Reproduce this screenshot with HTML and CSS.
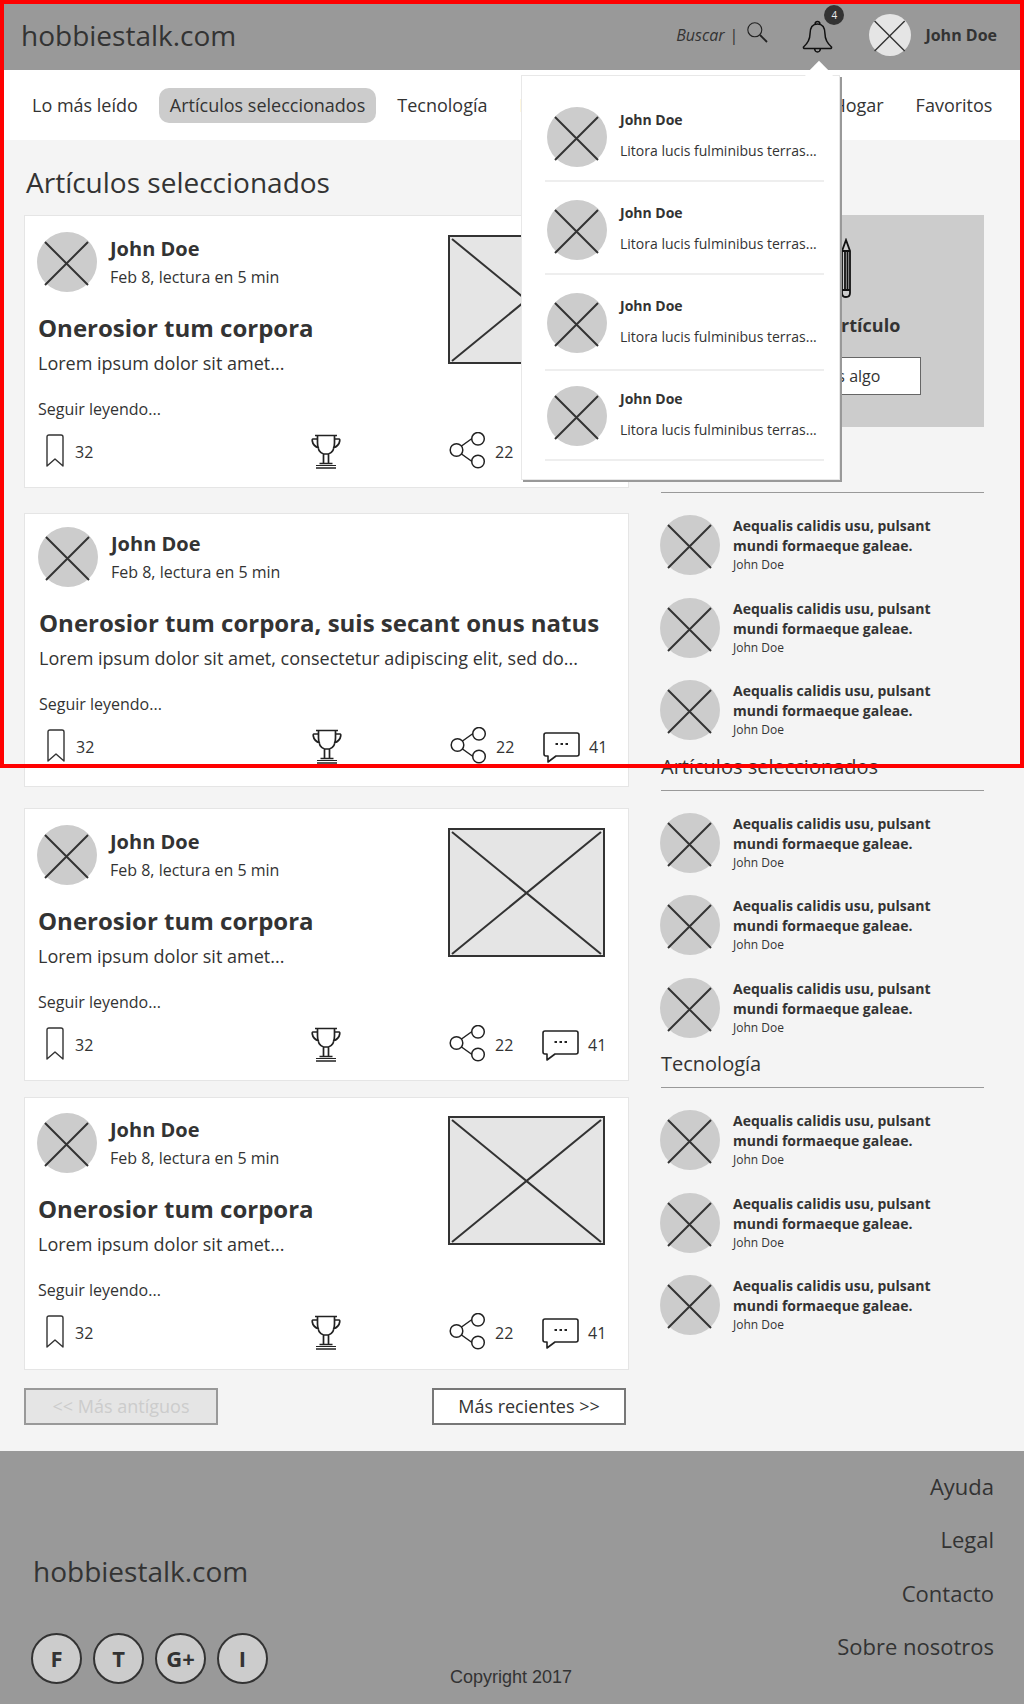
FILE: index.html
```html
<!DOCTYPE html>
<html lang="es">
<head>
<meta charset="utf-8">
<title>hobbiestalk.com</title>
<link rel="stylesheet" href="styles.css">
</head>
<body>
<svg class="defs" aria-hidden="true">
  <symbol id="i-avatar" viewBox="0 0 60 60">
    <circle cx="30" cy="30" r="30"/>
    <path d="M8 10 L51 53 M51 10 L8 53" fill="none" stroke="#333" stroke-width="2"/>
  </symbol>
  <symbol id="i-bookmark" viewBox="0 0 18 33">
    <path d="M1 32 V3 Q1 1 3 1 H15 Q17 1 17 3 V32 L9 25 Z" fill="none" stroke="#333" stroke-width="1.4" stroke-linejoin="round"/>
  </symbol>
  <symbol id="i-trophy" viewBox="0 0 30 36">
    <path d="M4 1.500 H26 M6.500 1.500 V9 Q6.500 18 12.500 20 V29 M23.500 1.500 V9 Q23.500 18 17.500 20 V29 M12.500 20 H17.500 M6 5 H2 Q1 5 1.300 7 Q2 12 8 14 M24 5 H28 Q29 5 28.700 7 Q28 12 22 14 M8.500 29.500 H21.500 M5 34 H25" fill="none" stroke="#222" stroke-width="1.700"/>
    <path d="M5 31.500 H25" stroke="#222" stroke-width="1"/>
  </symbol>
  <symbol id="i-share" viewBox="0 0 37 37">
    <path d="M12.500 14 L23 6.500 M12.500 22 L23 29.500" fill="none" stroke="#222" stroke-width="1.500"/>
    <circle cx="7.500" cy="18" r="6.300" fill="none" stroke="#222" stroke-width="1.500"/>
    <circle cx="29" cy="6.800" r="6.300" fill="none" stroke="#222" stroke-width="1.500"/>
    <circle cx="29" cy="29.500" r="6.300" fill="none" stroke="#222" stroke-width="1.500"/>
  </symbol>
  <symbol id="i-comment" viewBox="0 0 37 31">
    <path d="M3 1 H34 Q36 1 36 3 V22 Q36 24 34 24 H13 L5 30 V24 H3 Q1 24 1 22 V3 Q1 1 3 1 Z" fill="none" stroke="#222" stroke-width="1.600" stroke-linejoin="round"/>
    <path d="M12.500 12 H15 M17.500 12 H20 M22.500 12 H25" fill="none" stroke="#222" stroke-width="2"/>
  </symbol>
</svg>

<div class="page">
  <header class="topbar">
    <a class="logo">hobbiestalk.com</a>
    <div class="search"><span class="search-label">Buscar</span><span class="search-sep">|</span>
      <svg class="search-icon" viewBox="0 0 21 21"><circle cx="7.800" cy="7.800" r="7" fill="none" stroke="#222" stroke-width="1.100"/><path d="M13 13 L20 20" fill="none" stroke="#222" stroke-width="1.800"/></svg>
    </div>
    <div class="bell">
      <svg class="bell-icon" viewBox="0 0 31 33"><path d="M15.500 4 C9 4 8 9 8 14 C8 20 6 23 1.500 27 Q1 28.500 3 28.500 H28 Q30 28.500 29.500 27 C25 23 23 20 23 14 C23 9 22 4 15.500 4 Z M13 4.500 C13 .5 18 .5 18 4.500 M12.500 28.500 C13 33 18 33 18.500 28.500" fill="none" stroke="#111" stroke-width="1.500"/></svg>
      <span class="badge">4</span>
    </div>
    <svg class="avatar avatar-small avatar-light"><use href="#i-avatar"/></svg>
    <span class="user-name">John Doe</span>
  </header>

  <nav class="tabs">
    <a class="tab">Lo más leído</a>
    <a class="tab tab-active">Artículos seleccionados</a>
    <a class="tab">Tecnología</a>
    <a class="tab">Fotografía</a>
    <a class="tab">Música</a>
    <a class="tab">Películas</a>
    <a class="tab">Hogar</a>
    <a class="tab">Favoritos</a>
  </nav>

  <main class="content">
    <section class="articles">
      <h1 class="page-title">Artículos seleccionados</h1>

      <article class="card">
        <div class="card-top">
          <div class="card-main">
            <div class="author">
              <svg class="avatar"><use href="#i-avatar"/></svg>
              <div class="author-text"><div class="author-name">John Doe</div><div class="author-meta">Feb 8, lectura en 5 min</div></div>
            </div>
            <h2 class="card-title">Onerosior tum corpora</h2>
            <p class="card-lead">Lorem ipsum dolor sit amet...</p>
            <p class="card-more">Seguir leyendo...</p>
          </div>
          <svg class="thumb" viewBox="0 0 157 129"><rect x="1" y="1" width="155" height="127" fill="#e5e5e5" stroke="#333" stroke-width="2"/><path d="M4 4 L153 126 M153 4 L4 126" fill="none" stroke="#333" stroke-width="2"/></svg>
        </div>
        <div class="actions">
          <div class="action action-save"><svg class="ic-bookmark"><use href="#i-bookmark"/></svg><span>32</span></div>
          <div class="action"><svg class="ic-trophy"><use href="#i-trophy"/></svg></div>
          <div class="action"><svg class="ic-share"><use href="#i-share"/></svg><span>22</span></div>
          <div class="action"><svg class="ic-comment"><use href="#i-comment"/></svg><span>41</span></div>
        </div>
      </article>

      <article class="card card-wide">
        <div class="card-top">
          <div class="card-main">
            <div class="author">
              <svg class="avatar"><use href="#i-avatar"/></svg>
              <div class="author-text"><div class="author-name">John Doe</div><div class="author-meta">Feb 8, lectura en 5 min</div></div>
            </div>
            <h2 class="card-title">Onerosior tum corpora, suis secant onus natus</h2>
            <p class="card-lead">Lorem ipsum dolor sit amet, consectetur adipiscing elit, sed do...</p>
            <p class="card-more">Seguir leyendo...</p>
          </div>
        </div>
        <div class="actions">
          <div class="action action-save"><svg class="ic-bookmark"><use href="#i-bookmark"/></svg><span>32</span></div>
          <div class="action"><svg class="ic-trophy"><use href="#i-trophy"/></svg></div>
          <div class="action"><svg class="ic-share"><use href="#i-share"/></svg><span>22</span></div>
          <div class="action"><svg class="ic-comment"><use href="#i-comment"/></svg><span>41</span></div>
        </div>
      </article>

      <article class="card card-third">
        <div class="card-top">
          <div class="card-main">
            <div class="author">
              <svg class="avatar"><use href="#i-avatar"/></svg>
              <div class="author-text"><div class="author-name">John Doe</div><div class="author-meta">Feb 8, lectura en 5 min</div></div>
            </div>
            <h2 class="card-title">Onerosior tum corpora</h2>
            <p class="card-lead">Lorem ipsum dolor sit amet...</p>
            <p class="card-more">Seguir leyendo...</p>
          </div>
          <svg class="thumb" viewBox="0 0 157 129"><rect x="1" y="1" width="155" height="127" fill="#e5e5e5" stroke="#333" stroke-width="2"/><path d="M4 4 L153 126 M153 4 L4 126" fill="none" stroke="#333" stroke-width="2"/></svg>
        </div>
        <div class="actions">
          <div class="action action-save"><svg class="ic-bookmark"><use href="#i-bookmark"/></svg><span>32</span></div>
          <div class="action"><svg class="ic-trophy"><use href="#i-trophy"/></svg></div>
          <div class="action"><svg class="ic-share"><use href="#i-share"/></svg><span>22</span></div>
          <div class="action"><svg class="ic-comment"><use href="#i-comment"/></svg><span>41</span></div>
        </div>
      </article>

      <article class="card card-fourth">
        <div class="card-top">
          <div class="card-main">
            <div class="author">
              <svg class="avatar"><use href="#i-avatar"/></svg>
              <div class="author-text"><div class="author-name">John Doe</div><div class="author-meta">Feb 8, lectura en 5 min</div></div>
            </div>
            <h2 class="card-title">Onerosior tum corpora</h2>
            <p class="card-lead">Lorem ipsum dolor sit amet...</p>
            <p class="card-more">Seguir leyendo...</p>
          </div>
          <svg class="thumb" viewBox="0 0 157 129"><rect x="1" y="1" width="155" height="127" fill="#e5e5e5" stroke="#333" stroke-width="2"/><path d="M4 4 L153 126 M153 4 L4 126" fill="none" stroke="#333" stroke-width="2"/></svg>
        </div>
        <div class="actions">
          <div class="action action-save"><svg class="ic-bookmark"><use href="#i-bookmark"/></svg><span>32</span></div>
          <div class="action"><svg class="ic-trophy"><use href="#i-trophy"/></svg></div>
          <div class="action"><svg class="ic-share"><use href="#i-share"/></svg><span>22</span></div>
          <div class="action"><svg class="ic-comment"><use href="#i-comment"/></svg><span>41</span></div>
        </div>
      </article>

      <div class="pager">
        <a class="pager-btn pager-off">&lt;&lt; Más antíguos</a>
        <a class="pager-btn">Más recientes &gt;&gt;</a>
      </div>
    </section>

    <aside class="sidebar">
      <div class="cta">
        <svg class="pencil" viewBox="0 0 10 60"><path d="M1 13 L5 2 L9 13 V55 Q9 59 5 59 Q1 59 1 55 Z M1 13 H9 M4 14 V52 M6.500 14 V52 M1 52 H9" fill="none" stroke="#111" stroke-width="1.800"/></svg>
        <div class="cta-title">Redactar artículo</div>
        <a class="cta-btn">Cuéntanos algo</a>
      </div>

      <section class="side-section">
        <h3 class="side-title">Lo más leído</h3>
        <div class="side-item"><svg class="avatar"><use href="#i-avatar"/></svg><div><div class="side-text">Aequalis calidis usu, pulsant mundi formaeque galeae.</div><div class="side-author">John Doe</div></div></div>
        <div class="side-item"><svg class="avatar"><use href="#i-avatar"/></svg><div><div class="side-text">Aequalis calidis usu, pulsant mundi formaeque galeae.</div><div class="side-author">John Doe</div></div></div>
        <div class="side-item"><svg class="avatar"><use href="#i-avatar"/></svg><div><div class="side-text">Aequalis calidis usu, pulsant mundi formaeque galeae.</div><div class="side-author">John Doe</div></div></div>
      </section>

      <section class="side-section">
        <h3 class="side-title">Artículos seleccionados</h3>
        <div class="side-item"><svg class="avatar"><use href="#i-avatar"/></svg><div><div class="side-text">Aequalis calidis usu, pulsant mundi formaeque galeae.</div><div class="side-author">John Doe</div></div></div>
        <div class="side-item"><svg class="avatar"><use href="#i-avatar"/></svg><div><div class="side-text">Aequalis calidis usu, pulsant mundi formaeque galeae.</div><div class="side-author">John Doe</div></div></div>
        <div class="side-item"><svg class="avatar"><use href="#i-avatar"/></svg><div><div class="side-text">Aequalis calidis usu, pulsant mundi formaeque galeae.</div><div class="side-author">John Doe</div></div></div>
      </section>

      <section class="side-section">
        <h3 class="side-title">Tecnología</h3>
        <div class="side-item"><svg class="avatar"><use href="#i-avatar"/></svg><div><div class="side-text">Aequalis calidis usu, pulsant mundi formaeque galeae.</div><div class="side-author">John Doe</div></div></div>
        <div class="side-item"><svg class="avatar"><use href="#i-avatar"/></svg><div><div class="side-text">Aequalis calidis usu, pulsant mundi formaeque galeae.</div><div class="side-author">John Doe</div></div></div>
        <div class="side-item"><svg class="avatar"><use href="#i-avatar"/></svg><div><div class="side-text">Aequalis calidis usu, pulsant mundi formaeque galeae.</div><div class="side-author">John Doe</div></div></div>
      </section>
    </aside>
  </main>

  <footer class="footer">
    <div class="footer-brand">
      <div class="footer-logo">hobbiestalk.com</div>
      <div class="social">
        <a class="social-btn">F</a>
        <a class="social-btn">T</a>
        <a class="social-btn">G+</a>
        <a class="social-btn">I</a>
      </div>
    </div>
    <div class="copyright">Copyright 2017</div>
    <div class="footer-links">
      <a>Ayuda</a>
      <a>Legal</a>
      <a>Contacto</a>
      <a>Sobre nosotros</a>
    </div>
  </footer>

  <div class="popover">
    <span class="popover-arrow"></span>
    <div class="note"><svg class="avatar"><use href="#i-avatar"/></svg><div><div class="note-name">John Doe</div><div class="note-text">Litora lucis fulminibus terras...</div></div></div>
    <div class="note"><svg class="avatar"><use href="#i-avatar"/></svg><div><div class="note-name">John Doe</div><div class="note-text">Litora lucis fulminibus terras...</div></div></div>
    <div class="note note-tall"><svg class="avatar"><use href="#i-avatar"/></svg><div><div class="note-name">John Doe</div><div class="note-text">Litora lucis fulminibus terras...</div></div></div>
    <div class="note"><svg class="avatar"><use href="#i-avatar"/></svg><div><div class="note-name">John Doe</div><div class="note-text">Litora lucis fulminibus terras...</div></div></div>
  </div>

  <div class="fold-frame"></div>
</div>
</body>
</html>
```
FILE: styles.css
```css
* { box-sizing: border-box; }
html, body { margin: 0; padding: 0; }
body { font-family: "Open Sans", sans-serif; color: #333; background: #f4f4f4; }
h1, h2, h3, p { margin: 0; font-weight: normal; }
.defs { display: none; }

.page { position: relative; width: 1024px; height: 1704px; overflow: hidden; }

.avatar { display: block; flex: none; width: 60px; height: 60px; fill: #ccc; }
.avatar-small { width: 42px; height: 42px; margin-left: 36px; }
.avatar-light { fill: #e5e5e5; }

/* top bar */
.topbar { display: flex; align-items: center; height: 70px; padding: 0 27px 0 21px; background: #999; }
.logo { font-size: 28px; line-height: 38px; }
.search { display: flex; align-items: center; margin-left: auto; }
.search-label { font-size: 16px; font-style: italic; }
.search-sep { margin-left: 5px; font-size: 16px; }
.search-icon { width: 21px; height: 21px; margin: -5px 0 0 9px; }
.bell { position: relative; width: 31px; height: 33px; margin: 3px 0 0 34px; }
.bell-icon { display: block; width: 31px; height: 33px; }
.badge { position: absolute; left: 22px; top: -15px; width: 20px; height: 20px; border-radius: 50%; background: #333; color: #eee; font-size: 10px; line-height: 20px; text-align: center; }
.user-name { margin-left: 14px; font-size: 16px; font-weight: 700; }

/* tabs */
.tabs { display: flex; align-items: center; gap: 10px; height: 70px; padding: 0 0 0 21px; background: #fff; }
.tab { padding: 0 11px; height: 35px; font-size: 18px; line-height: 35px; border-radius: 10px; white-space: nowrap; }
.tab-active { background: #ccc; }

/* layout */
.content { display: flex; height: 1311px; padding: 23px 0 0 24px; background: #f4f4f4; }
.articles { width: 605px; flex: none; }
.page-title { margin: 0 0 14px 2px; font-size: 28px; line-height: 38px; }

/* cards */
.card { height: 273px; padding: 16px 23px 0 13px; background: #fff; border: 1px solid #e5e5e5; }
.card-wide { margin-top: 25px; height: 274px; padding-top: 13px; padding-left: 14px; }
.card-third { margin-top: 21px; padding-top: 16px; }
.card-fourth { margin-top: 16px; padding-top: 15px; }
.card-top { display: flex; justify-content: space-between; }
.author { display: flex; gap: 13px; margin-left: -1px; }
.author-text { padding-top: 3px; }
.author-name { font-size: 20px; line-height: 28px; font-weight: 700; }
.author-meta { margin-top: 2px; font-size: 16px; line-height: 24px; }
.card-title { margin-top: 20px; font-size: 24px; line-height: 32px; font-weight: 700; white-space: nowrap; }
.card-lead { margin-top: 5px; font-size: 18px; line-height: 28px; white-space: nowrap; }
.card-more { margin-top: 20px; font-size: 16px; line-height: 24px; }
.thumb { display: block; flex: none; width: 157px; height: 129px; margin-top: 3px; }

.actions { display: grid; grid-template-columns: 265px 138px 93px auto; height: 36px; margin-top: 10px; padding-left: 8px; }
.action { display: flex; align-items: center; gap: 9px; font-size: 16px; line-height: 24px; }
.action-save { gap: 11px; }
.action span { padding-top: 3px; }
.ic-bookmark { width: 18px; height: 33px; }
.ic-trophy { width: 30px; height: 36px; margin-top: 3px; }
.ic-share { width: 37px; height: 37px; }
.ic-comment { width: 37px; height: 31px; margin-top: 4px; }

/* pager */
.pager { display: flex; justify-content: space-between; margin-top: 18px; width: 602px; }
.pager-btn { width: 194px; height: 37px; font-size: 18px; line-height: 33px; text-align: center; background: #fff; border: 2px solid #777; }
.pager-off { background: #e5e5e5; border-color: #999; color: #ccc; }

/* sidebar */
.sidebar { width: 323px; flex: none; margin: 52px 0 0 32px; }
.cta { display: flex; flex-direction: column; align-items: center; height: 212px; padding-top: 23px; background: #ccc; }
.pencil { display: block; width: 10px; height: 60px; margin-left: 46px; }
.cta-title { margin-top: 14px; font-size: 18px; line-height: 26px; font-weight: 700; }
.cta-btn { width: 197px; height: 38px; margin-top: 19px; font-size: 16px; line-height: 36px; text-align: center; background: #fff; border: 1px solid #666; }

.side-section { height: 297.600px; }
.sidebar > .side-section:first-of-type { margin-top: 28px; }
.side-title { padding-bottom: 9px; margin-bottom: 22px; border-bottom: 1px solid #999; font-size: 20px; line-height: 28px; }
.side-item { display: flex; gap: 13px; height: 60px; margin: 0 0 22.500px -1px; }
.side-text { padding-top: 1px; font-size: 14px; line-height: 20px; font-weight: 700; width: 215px; }
.side-author { font-size: 12px; line-height: 18px; }

/* footer */
.footer { display: grid; grid-template-columns: 450px 1fr auto; height: 253px; background: #999; }
.footer-brand { padding: 101px 0 0 33px; }
.footer-logo { font-size: 28px; line-height: 38px; }
.social { display: flex; gap: 11px; margin: 43px 0 0 -2px; }
.social-btn { width: 51px; height: 51px; border: 2px solid #333; border-radius: 50%; background: #ccc; font-size: 22px; line-height: 47px; font-weight: 700; text-align: center; }
.copyright { align-self: end; padding-bottom: 17px; font-family: "Liberation Sans", Arial, sans-serif; font-size: 18px; line-height: 20px; }
.footer-links { display: flex; flex-direction: column; align-items: flex-end; padding: 9px 30px 0 0; font-size: 22px; line-height: 53.300px; }

/* notifications popover */
.popover { position: absolute; left: 521px; top: 75px; width: 319px; height: 405px; padding: 31px 15px 0 23px; background: #fff; border: 1px solid #e8e8e8; box-shadow: 2px 2px 0 #999; }
.popover-arrow { position: absolute; left: 287px; top: -11px; width: 20px; height: 20px; background: #fff; transform: rotate(45deg); }
.note { display: flex; gap: 13px; height: 75px; padding-left: 2px; margin-bottom: 18px; border-bottom: 2px solid #eee; }
.note-tall { height: 78px; margin-bottom: 15px; }
.note-name { padding-top: 3px; font-size: 14px; line-height: 20px; font-weight: 700; }
.note-text { margin-top: 11px; font-size: 14px; line-height: 20px; white-space: nowrap; }

/* capture frame marking the visible fold */
.fold-frame { position: absolute; left: 0; top: 0; width: 1024px; height: 768px; border: 4px solid #f00; pointer-events: none; }
```
